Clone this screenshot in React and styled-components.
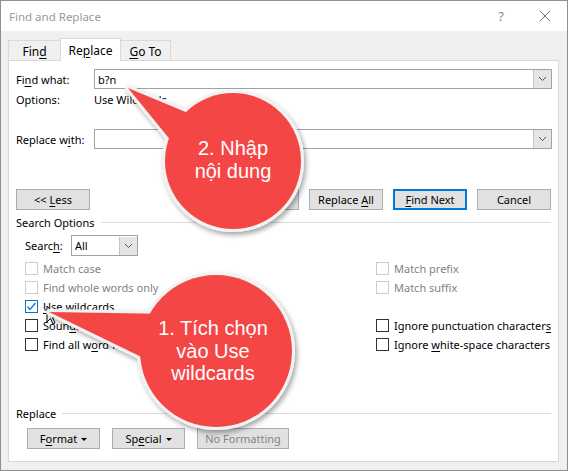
import React from "react";
import styled, { createGlobalStyle } from "styled-components";

const GlobalStyle = createGlobalStyle`
  html, body { margin: 0; padding: 0; background: #fff; }
  body { font-family: "Noto Sans", "Open Sans", sans-serif; font-size: 11px; color: #000; }
  * { box-sizing: border-box; }
`;

const RED = "#f54646";

const Window = styled.div`
  position: relative;
  width: 568px;
  height: 471px;
  border: 1px solid #8f8f8f;
  background: #f0f0f0;
  display: flex;
  flex-direction: column;
  overflow: hidden;
`;

const TitleBar = styled.div`
  height: 30px;
  background: #fff;
  display: flex;
  align-items: center;
  padding-left: 8px;
  color: #9a9a9a;
  font-size: 11.5px;
`;

const TitleText = styled.span`
  flex: 1;
`;

const TitleButton = styled.div`
  width: 44px;
  height: 30px;
  display: flex;
  align-items: center;
  justify-content: center;
  color: #8a8a8a;
  font-size: 13px;
`;

const Body = styled.div`
  flex: 1;
  display: flex;
  flex-direction: column;
  padding: 7px 8px 8px 7px;
`;

const TabRow = styled.div`
  display: flex;
  align-items: flex-end;
  height: 23px;
  margin-bottom: -1px;
  position: relative;
  z-index: 1;
`;

const Tab = styled.div`
  width: ${(p) => p.$w}px;
  height: ${(p) => (p.$active ? 23 : 20)}px;
  margin-bottom: ${(p) => (p.$active ? 0 : 1)}px;
  margin-left: ${(p) => (p.$first ? 0 : -1)}px;
  background: ${(p) => (p.$active ? "#fff" : "#f0f0f0")};
  border: 1px solid #d9d9d9;
  border-bottom: none;
  display: flex;
  align-items: center;
  justify-content: center;
  font-size: 12px;
  padding-top: ${(p) => (p.$active ? 0 : 1)}px;
  position: relative;
  z-index: ${(p) => (p.$active ? 2 : 1)};
`;

const Panel = styled.div`
  flex: 1;
  background: #fff;
  border: 1px solid #d9d9d9;
  display: flex;
  flex-direction: column;
  padding: 8px 6px 0 7px;
`;

const Key = styled.span`
  text-decoration: underline;
  text-underline-offset: 2px;
`;

const FieldRow = styled.div`
  display: flex;
  align-items: center;
  height: ${(p) => p.$h || 20}px;
  margin-top: ${(p) => p.$mt || 0}px;
`;

const FieldLabel = styled.div`
  width: 78px;
  flex-shrink: 0;
`;

const Combo = styled.div`
  flex: 1;
  height: 20px;
  border: 1px solid #a2a2a2;
  display: flex;
  align-items: center;
  padding-left: 3px;
  background: #fff;
`;

const ComboValue = styled.span`
  flex: 1;
`;

const DropButton = styled.div`
  width: 18px;
  height: 18px;
  background: #e5e5e5;
  border-left: 1px solid #c4c4c4;
  display: flex;
  align-items: center;
  justify-content: center;
`;

const ButtonRow = styled.div`
  display: flex;
  align-items: center;
  gap: ${(p) => p.$gap || 10}px;
  margin-top: ${(p) => p.$mt || 0}px;
  padding-left: ${(p) => p.$indent || 0}px;
  padding-right: ${(p) => p.$endPad || 0}px;
`;

const Button = styled.div`
  width: ${(p) => p.$w || 74}px;
  height: 21px;
  background: #e1e1e1;
  border: ${(p) => (p.$default ? "2px solid #0078d7" : "1px solid #adadad")};
  color: ${(p) => (p.$disabled ? "#838383" : "#000")};
  display: flex;
  align-items: center;
  justify-content: center;
  gap: 4px;
  white-space: nowrap;
  margin-left: ${(p) => (p.$push ? "auto" : "0")};
`;

const SectionHeading = styled.div`
  display: flex;
  align-items: center;
  height: 16px;
  margin-top: ${(p) => p.$mt || 0}px;
  &::after {
    content: "";
    flex: 1;
    height: 1px;
    background: #dcdcdc;
    margin-left: 6px;
    margin-right: 1px;
  }
`;

const SearchRow = styled.div`
  display: flex;
  align-items: center;
  height: 21px;
  margin-top: 5px;
  padding-left: 9px;
`;

const SearchLabel = styled.div`
  width: 46px;
`;

const Select = styled.div`
  width: 67px;
  height: 21px;
  border: 1px solid #a2a2a2;
  display: flex;
  align-items: center;
  padding-left: 3px;
`;

const OptionGrid = styled.div`
  display: grid;
  grid-template-columns: 351px 1fr;
  grid-auto-rows: 19px;
  margin-top: 3px;
  padding-left: 9px;
`;

const CheckRow = styled.label`
  display: flex;
  align-items: center;
  gap: 5px;
  white-space: nowrap;
  color: ${(p) => (p.$disabled ? "#838383" : "#000")};
`;

const Box = styled.span`
  width: 13px;
  height: 13px;
  flex-shrink: 0;
  border: 1px solid ${(p) => (p.$disabled ? "#cccccc" : p.$checked ? "#0078d7" : "#333")};
  background: #fff;
  display: flex;
  align-items: center;
  justify-content: center;
`;

const Caret = styled.span`
  width: 0;
  height: 0;
  border-left: 3px solid transparent;
  border-right: 3px solid transparent;
  border-top: 3px solid #000;
  margin-top: 1px;
`;

const Overlay = styled.svg`
  position: absolute;
  left: -1px;
  top: -1px;
  pointer-events: none;
`;

const CalloutText = styled.div`
  position: absolute;
  left: ${(p) => p.$x}px;
  top: ${(p) => p.$y}px;
  transform: translateX(-50%);
  color: #fff;
  font-family: "Liberation Sans", Arial, sans-serif;
  font-size: 20px;
  line-height: ${(p) => p.$lh}px;
  text-align: center;
  white-space: nowrap;
`;

function Chevron() {
  return (
    <svg width="9" height="6" viewBox="0 0 9 6">
      <polyline points="1,1 4.5,4.5 8,1" fill="none" stroke="#555" strokeWidth="1" />
    </svg>
  );
}

function Check() {
  return (
    <svg width="11" height="11" viewBox="0 0 11 11">
      <polyline points="1.5,5.5 4,8.5 9.5,2" fill="none" stroke="#0078d7" strokeWidth="1.3" />
    </svg>
  );
}

function Checkbox({ label, disabled, checked }) {
  return (
    <CheckRow $disabled={disabled}>
      <Box $disabled={disabled} $checked={checked}>
        {checked && <Check />}
      </Box>
      <span>{label}</span>
    </CheckRow>
  );
}

const callouts = [
  {
    cx: 233, cy: 161, r: 68,
    pts: "128,88 200,118 185,158",
    text: ["2. Nhập", "nội dung"], tx: 233, ty: 137, lh: 23,
  },
  {
    cx: 216, cy: 351, r: 76,
    pts: "49,312 172,314 162,367",
    text: ["1. Tích chọn", "vào Use", "wildcards"], tx: 213, ty: 317, lh: 22.5,
  },
];

function Callouts() {
  return (
    <>
      <Overlay width="568" height="471" viewBox="0 0 568 471">
        <defs>
          <filter id="shade" x="-20%" y="-20%" width="140%" height="140%">
            <feDropShadow dx="2" dy="3" stdDeviation="2.5" floodColor="#000" floodOpacity="0.35" />
          </filter>
        </defs>
        {/* mouse pointer, partly under the tail */}
        <path d="M47 306 L47 322 L50.5 318.5 L53 324 L55 323 L52.5 317.5 L57 317.5 Z" fill="#fff" stroke="#000" strokeWidth="1" />
        {callouts.map((c, i) => (
          <g key={i}>
            <g filter="url(#shade)">
              <circle cx={c.cx} cy={c.cy} r={c.r} fill="#f2f2f2" stroke="#f2f2f2" strokeWidth="6" />
              <polygon points={c.pts} fill="#f2f2f2" stroke="#f2f2f2" strokeWidth="6" strokeLinejoin="round" />
            </g>
            <circle cx={c.cx} cy={c.cy} r={c.r} fill={RED} />
            <polygon points={c.pts} fill={RED} />
          </g>
        ))}
      </Overlay>
      {callouts.map((c, i) => (
        <CalloutText key={i} $x={c.tx - 1} $y={c.ty - 1} $lh={c.lh}>
          {c.text.map((t) => (
            <div key={t}>{t}</div>
          ))}
        </CalloutText>
      ))}
    </>
  );
}

export default function App() {
  return (
    <>
      <GlobalStyle />
      <Window>
        <TitleBar>
          <TitleText>Find and Replace</TitleText>
          <TitleButton>?</TitleButton>
          <TitleButton>
            <svg width="12" height="12" viewBox="0 0 12 12">
              <path d="M1 1 L11 11 M11 1 L1 11" stroke="#777" strokeWidth="1" />
            </svg>
          </TitleButton>
        </TitleBar>
        <Body>
          <TabRow>
            <Tab $w={53} $first>
              <span>Fin<Key>d</Key></span>
            </Tab>
            <Tab $w={61} $active>
              <span>Re<Key>p</Key>lace</span>
            </Tab>
            <Tab $w={51}>
              <span><Key>G</Key>o To</span>
            </Tab>
          </TabRow>
          <Panel>
            <FieldRow>
              <FieldLabel>Fi<Key>n</Key>d what:</FieldLabel>
              <Combo>
                <ComboValue>b?n</ComboValue>
                <DropButton><Chevron /></DropButton>
              </Combo>
            </FieldRow>
            <FieldRow $h={16} $mt={2}>
              <FieldLabel>Options:</FieldLabel>
              <span>Use Wildcards</span>
            </FieldRow>
            <FieldRow $mt={22}>
              <FieldLabel>Replace w<Key>i</Key>th:</FieldLabel>
              <Combo>
                <ComboValue />
                <DropButton><Chevron /></DropButton>
              </Combo>
            </FieldRow>
            <ButtonRow $mt={40} $gap={10} $endPad={1}>
              <Button>
                <span>&lt;&lt; <Key>L</Key>ess</span>
              </Button>
              <Button $push>
                <span><Key>R</Key>eplace</span>
              </Button>
              <Button>
                <span>Replace <Key>A</Key>ll</span>
              </Button>
              <Button $default>
                <span><Key>F</Key>ind Next</span>
              </Button>
              <Button>
                <span>Cancel</span>
              </Button>
            </ButtonRow>
            <SectionHeading $mt={4}>Search Options</SectionHeading>
            <SearchRow>
              <SearchLabel>Searc<Key>h</Key>:</SearchLabel>
              <Select>
                <ComboValue>All</ComboValue>
                <DropButton><Chevron /></DropButton>
              </Select>
            </SearchRow>
            <OptionGrid>
              <Checkbox label="Match case" disabled />
              <Checkbox label="Match prefix" disabled />
              <Checkbox label="Find whole words only" disabled />
              <Checkbox label="Match suffix" disabled />
              <Checkbox label={<><Key>U</Key>se wildcards</>} checked />
              <span />
              <Checkbox label={<>Soun<Key>d</Key>s like (English)</>} />
              <Checkbox label={<>Ignore punctuation character<Key>s</Key></>} />
              <Checkbox label={<>Find all w<Key>o</Key>rd forms (English)</>} />
              <Checkbox label={<>Ignore <Key>w</Key>hite-space characters</>} />
            </OptionGrid>
            <SectionHeading $mt={51}>Replace</SectionHeading>
            <ButtonRow $mt={7} $indent={11} $gap={12}>
              <Button $w={73}>
                <span>F<Key>o</Key>rmat</span>
                <Caret />
              </Button>
              <Button $w={73}>
                <span>Sp<Key>e</Key>cial</span>
                <Caret />
              </Button>
              <Button $w={92} $disabled>
                <span>No Formatting</span>
              </Button>
            </ButtonRow>
          </Panel>
        </Body>
        <Callouts />
      </Window>
    </>
  );
}
